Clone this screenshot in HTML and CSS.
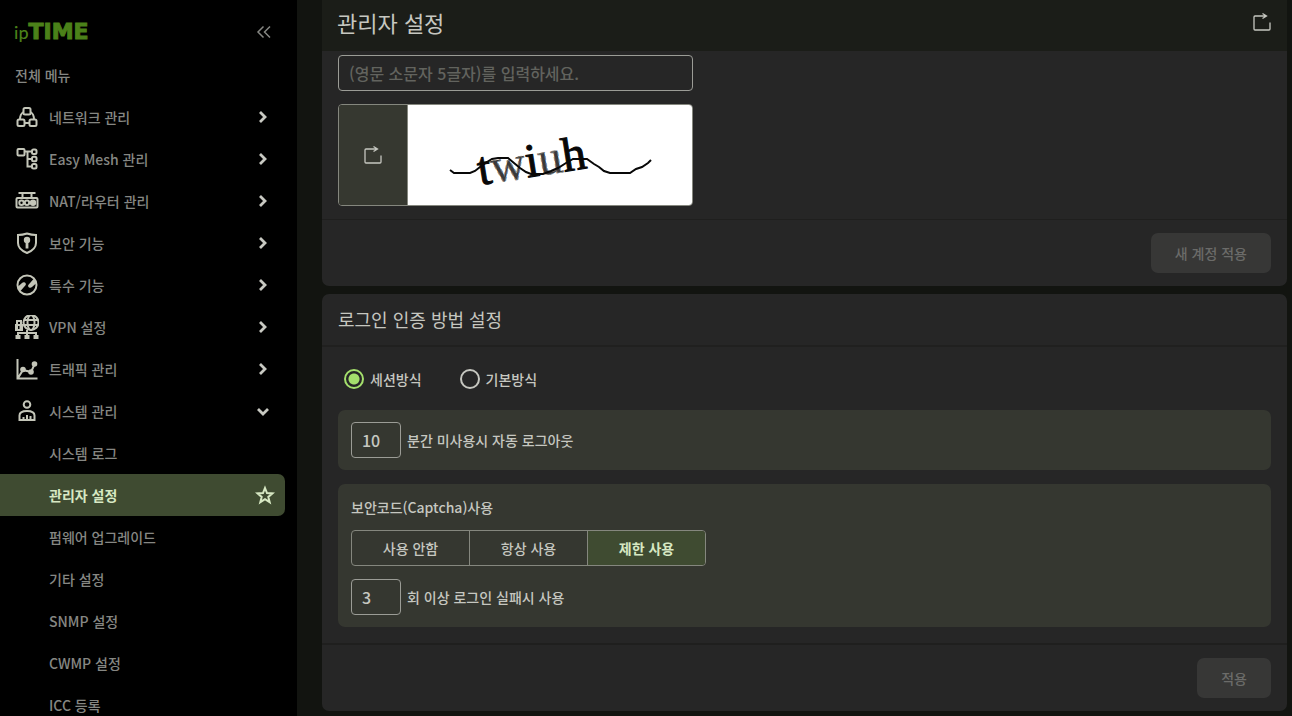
FILE: index.html
```html
<!DOCTYPE html>
<html lang="ko">
<head>
    <meta charset="UTF-8">
    <meta name="viewport" content="width=device-width, initial-scale=1.0">
    <title>ipTIME 관리자 설정</title>
    <link rel="stylesheet" href="styles.css">
</head>
<body>
    <!-- Left side: menu -->
    <aside class="sidebar">
        <div class="sidebar-top">
            <a class="logo" href="#"><span class="logo-ip">ip</span><span class="logo-time">TIME</span></a>
            <button class="icon-button" aria-label="메뉴 접기">
                <svg class="collapse" viewBox="0 0 16 14"><path d="M7.500 1.500 2 7l5.500 5.500M14 1.500 8.500 7l5.500 5.500"/></svg>
            </button>
        </div>
        <nav>
            <p class="menu-title">전체 메뉴</p>
            <button class="menu-item">
                <svg class="icon" viewBox="0 0 24 24"><rect x="8.500" y="3" width="7" height="6.500" rx="1.500"/><rect x="2.500" y="14.500" width="7" height="6.500" rx="1.500"/><rect x="14.500" y="14.500" width="7" height="6.500" rx="1.500"/><path d="M8.500 7C6 8.500 5 11 5 14.500M15.500 7C18 8.500 19 11 19 14.500M9.500 18h5"/></svg>
                <span>네트워크 관리</span>
                <svg class="arrow" viewBox="0 0 14 14"><path d="m4 2 5 5-5 5"/></svg>
            </button>
            <button class="menu-item">
                <svg class="icon" viewBox="0 0 24 24"><rect x="2.500" y="2" width="7" height="6.500" rx="1"/><path d="M9.500 4.500H17M12.500 4.500v15H17M12.500 12H17"/><rect x="17" y="2.500" width="4.500" height="4.500" rx="1.500"/><rect x="17" y="9.800" width="4.500" height="4.500" rx="1.500"/><rect x="17" y="17" width="4.500" height="4.500" rx="1.500"/></svg>
                <span>Easy Mesh 관리</span>
                <svg class="arrow" viewBox="0 0 14 14"><path d="m4 2 5 5-5 5"/></svg>
            </button>
            <button class="menu-item">
                <svg class="icon" viewBox="0 0 24 24"><path d="M3.500 4h17M7.500 4v5M16.500 4v5"/><rect x="1.500" y="9" width="21" height="9.500" rx="1"/><circle cx="6.500" cy="13.700" r="2.200"/><circle cx="12" cy="13.700" r="2.200"/><circle class="fill" cx="18" cy="13.700" r="3.200"/></svg>
                <span>NAT/라우터 관리</span>
                <svg class="arrow" viewBox="0 0 14 14"><path d="m4 2 5 5-5 5"/></svg>
            </button>
            <button class="menu-item">
                <svg class="icon" viewBox="0 0 24 24"><path d="M12 2.500c3 1 6 1.500 9 1.500v8c0 4.500-4 8-9 10-5-2-9-5.500-9-10V4c3 0 6-.5 9-1.500z"/><circle class="fill" cx="12" cy="9" r="3.200"/><path class="thick" d="M12 9v8.500"/></svg>
                <span>보안 기능</span>
                <svg class="arrow" viewBox="0 0 14 14"><path d="m4 2 5 5-5 5"/></svg>
            </button>
            <button class="menu-item">
                <svg class="icon" viewBox="0 0 24 24"><circle cx="12" cy="12" r="9.500"/><path class="fill" d="M2.500 14 7 10c2-1.800 5 .3 3.500 2.300L5.500 18zM21.500 10 17 14c-2 1.800-5-.3-3.500-2.300L18.500 6z"/></svg>
                <span>특수 기능</span>
                <svg class="arrow" viewBox="0 0 14 14"><path d="m4 2 5 5-5 5"/></svg>
            </button>
            <button class="menu-item">
                <svg class="icon" viewBox="0 0 24 24"><circle cx="16" cy="7.500" r="7.500"/><ellipse cx="16" cy="7.500" rx="3.500" ry="7.500"/><path d="M9 5h14M9 10h14"/><path class="fill" fill-rule="evenodd" d="M0 9h1V5h6v4h1v7H0zm3 0h2V7H3zM3 11v3h1.500v-3z"/><path d="M12 15v6M3 20v-2h18v2"/><path class="fill" d="M.5 20h5v4h-5zM9.500 20h5v4h-5zM18.500 20h5v4h-5z"/></svg>
                <span>VPN 설정</span>
                <svg class="arrow" viewBox="0 0 14 14"><path d="m4 2 5 5-5 5"/></svg>
            </button>
            <button class="menu-item">
                <svg class="icon" viewBox="0 0 24 24"><path d="M2.500 2v19.500h20M3 21l5-8 8 2 3.500-7.500"/><circle class="fill" cx="8" cy="12.500" r="2.800"/><circle class="fill" cx="16" cy="15" r="2.800"/><circle class="fill" cx="19.500" cy="7" r="2.800"/></svg>
                <span>트래픽 관리</span>
                <svg class="arrow" viewBox="0 0 14 14"><path d="m4 2 5 5-5 5"/></svg>
            </button>
            <button class="menu-item" aria-expanded="true">
                <svg class="icon" viewBox="0 0 24 24"><circle cx="12" cy="5.500" r="3.300"/><path d="M4.500 21v-4.500c0-3 3-4.500 7.500-4.500s7.500 1.500 7.500 4.500V21z"/><path d="M8.500 21v-3M12 21v-5M15.500 21v-4"/></svg>
                <span>시스템 관리</span>
                <svg class="arrow" viewBox="0 0 14 14"><path d="m2 5 5 5 5-5"/></svg>
            </button>
            <ul class="submenu">
                <li><a href="#">시스템 로그</a></li>
                <li>
                    <a class="active" href="#">관리자 설정
                        <svg class="star" viewBox="0 0 20 20"><path d="m10 3 2 5 5.500.4-4.200 3.500 1.400 5.300-4.700-3-4.700 3 1.400-5.300L2.500 8.400 8 8z"/></svg>
                    </a>
                </li>
                <li><a href="#">펌웨어 업그레이드</a></li>
                <li><a href="#">기타 설정</a></li>
                <li><a href="#">SNMP 설정</a></li>
                <li><a href="#">CWMP 설정</a></li>
                <li><a href="#">ICC 등록</a></li>
            </ul>
        </nav>
    </aside>

    <!-- Right side: settings -->
    <main class="content">
        <header class="page-header">
            <h1>관리자 설정</h1>
            <button class="icon-button" aria-label="새로고침">
                <svg class="refresh" viewBox="0 0 20 20"><path d="M14 4H3Q2 4 2 5v12q0 1 1 1h14q1 0 1-1v-6.500M10.500 1.500 14.500 4l-4 2.500"/></svg>
            </button>
        </header>

        <section class="card account">
            <div class="account-body">
                <input class="captcha-input" type="text" placeholder="(영문 소문자 5글자)를 입력하세요." aria-label="보안코드">
                <div class="captcha">
                    <button class="captcha-refresh" aria-label="보안코드 새로고침">
                        <svg class="refresh" viewBox="0 0 20 20"><path d="M14 4H3Q2 4 2 5v12q0 1 1 1h14q1 0 1-1v-6.500M10.500 1.500 14.500 4l-4 2.500"/></svg>
                    </button>
                    <svg class="captcha-image" viewBox="0 0 284 100">
                        <text x="72" y="80" transform="rotate(-9 72 80)">t<tspan class="faded">w</tspan>i<tspan class="faded">u</tspan>h</text>
                        <path d="m42 65 4 3h16l5-2 5-4 7-5 5-3 6-1h10l6 5 6 5 6 4 5 2h12l8-3 7-3 8-5 7-4h14l7 5 5 3 5 4 6 2h20l6-4 6-2 6-4 3-3"/>
                    </svg>
                </div>
            </div>
            <div class="card-footer">
                <button class="button" disabled>새 계정 적용</button>
            </div>
        </section>

        <section class="card">
            <h2>로그인 인증 방법 설정</h2>
            <div class="card-body">
                <div class="radios">
                    <label><input type="radio" name="auth" checked>세션방식</label>
                    <label><input type="radio" name="auth">기본방식</label>
                </div>
                <div class="box">
                    <div class="number-row">
                        <input id="timeout" type="text" value="10">
                        <label for="timeout">분간 미사용시 자동 로그아웃</label>
                    </div>
                </div>
                <div class="box">
                    <p class="box-title">보안코드(Captcha)사용</p>
                    <div class="segments">
                        <button>사용 안함</button>
                        <button>항상 사용</button>
                        <button class="selected">제한 사용</button>
                    </div>
                    <div class="number-row">
                        <input id="failures" type="text" value="3">
                        <label for="failures">회 이상 로그인 실패시 사용</label>
                    </div>
                </div>
            </div>
            <div class="card-footer">
                <button class="button" disabled>적용</button>
            </div>
        </section>
    </main>
</body>
</html>
```
FILE: styles.css
```css
* { box-sizing: border-box; }

body {
    margin: 0;
    display: flex;
    height: 100vh;
    overflow: hidden;
    background: #121410;
    color: #c6c7c0;
    font-family: "Noto Sans CJK KR", sans-serif;
    font-size: 14px;
    font-weight: 500;
    line-height: 22px;
}

h1, h2, p, ul { margin: 0; padding: 0; }
h1, h2 { font-weight: 400; }
a { color: inherit; text-decoration: none; }
button, input { font: inherit; color: inherit; margin: 0; }
button { background: none; border: none; padding: 0; cursor: pointer; }
svg { display: block; flex: none; fill: none; stroke: currentColor; }

/* Sidebar */
.sidebar { width: 297px; flex: none; overflow: hidden; background: #000; color: #868783; }
.sidebar-top {
    display: flex;
    align-items: center;
    justify-content: space-between;
    height: 54px;
    padding: 10px 25px 0 14px;
}
.logo { display: flex; align-items: baseline; color: #4b8119; }
.logo-ip { font-family: Lato, sans-serif; font-size: 18px; }
.logo-time { font-family: "DejaVu Sans", sans-serif; font-size: 22px; font-weight: 700; -webkit-text-stroke: 1px #4b8119; }
.collapse { width: 16px; height: 14px; stroke-width: 1.5; }

.menu-title, .menu-item, .submenu a { height: 42px; display: flex; align-items: center; }
.menu-title { padding-left: 15px; }
.menu-item { width: 100%; padding: 0 27px 0 15px; gap: 10px; text-align: left; }
.menu-item span { flex: 1; }
.icon { width: 24px; height: 24px; color: #c4c6b9; stroke-width: 2; }
.icon .fill { fill: currentColor; stroke: none; }
.icon .thick { stroke-width: 2.8; }
.arrow { width: 14px; height: 14px; color: #c8c9c2; stroke-width: 2.8; }

.submenu { list-style: none; }
.submenu a { width: 285px; padding: 0 10px 0 49px; justify-content: space-between; }
.submenu .active { background: #3f4b31; color: #d7e8c3; font-weight: 700; border-radius: 0 7px 7px 0; }
.star { width: 20px; height: 20px; stroke-width: 2; }

/* Content */
.content { flex: 1; padding: 0 5px 0 25px; }
.page-header {
    display: flex;
    align-items: center;
    justify-content: space-between;
    height: 51px;
    padding: 0 15px 8px;
    background: #1b1d18;
}
h1 { font-size: 22px; }
.refresh { width: 20px; height: 20px; stroke-width: 1.3; }

.card { margin-bottom: 8px; background: #262626; border-radius: 7px; }
.account { border-radius: 0 0 7px 7px; }
.account-body { padding: 4px 16px 13px; }
h2 { height: 53px; padding: 14px 16px; border-bottom: 2px solid #20201f; font-size: 18px; }
.card-body { padding: 20px 16px 16px; }
.card-footer { display: flex; justify-content: flex-end; padding: 13px 16px; border-top: 2px solid #1f1f1e; }
.account .card-footer { border-top-width: 1px; }
.button { height: 40px; padding: 0 24px; border-radius: 7px; background: #373736; color: #6b6b69; cursor: default; }

input[type="text"] {
    height: 36px;
    padding: 0 10px;
    border: 1px solid #9b9c96;
    border-radius: 4px;
    background: transparent;
    font-size: 16px;
    outline: none;
}
.captcha-input { display: block; width: 355px; }
.captcha-input::placeholder { color: #62635e; opacity: 1; }
.captcha {
    display: flex;
    width: 355px;
    height: 102px;
    margin-top: 13px;
    border: 1px solid #85877e;
    border-radius: 4px;
    overflow: hidden;
}
.captcha-refresh { flex: 1; display: flex; align-items: center; justify-content: center; background: #363830; border-right: 1px solid #85877e; }
.captcha-image { width: 284px; height: 100px; background: #fff; color: #080808; stroke-width: 2; }
.captcha-image text { font: 48px "Liberation Serif", serif; fill: #080808; stroke: #080808; stroke-width: 1; }
.captcha-image .faded { fill: #3a3a3a; stroke: #777; stroke-dasharray: 4 3; }

.radios { display: flex; gap: 38px; padding-left: 6px; margin-bottom: 20px; }
.radios label { display: flex; align-items: center; gap: 6px; height: 23px; }
input[type="radio"] { appearance: none; width: 20px; height: 20px; border: 2px solid #c6c7c0; border-radius: 50%; }
input[type="radio"]:checked { border-color: #a4df6c; background: radial-gradient(circle, #a4df6c 5px, transparent 6px); }

.box { padding: 12px 13px; background: #353730; border-radius: 7px; }
.box + .box { margin-top: 14px; }
.number-row { display: flex; align-items: center; gap: 6px; }
.number-row input { width: 50px; }
.segments { display: flex; width: 355px; height: 36px; margin: 12px 0 13px; border: 1px solid #85877e; border-radius: 4px; overflow: hidden; }
.segments button { flex: 1; }
.segments button + button { border-left: 1px solid #85877e; }
.segments .selected { background: #3f4b31; color: #d7e8c3; font-weight: 700; }
```
